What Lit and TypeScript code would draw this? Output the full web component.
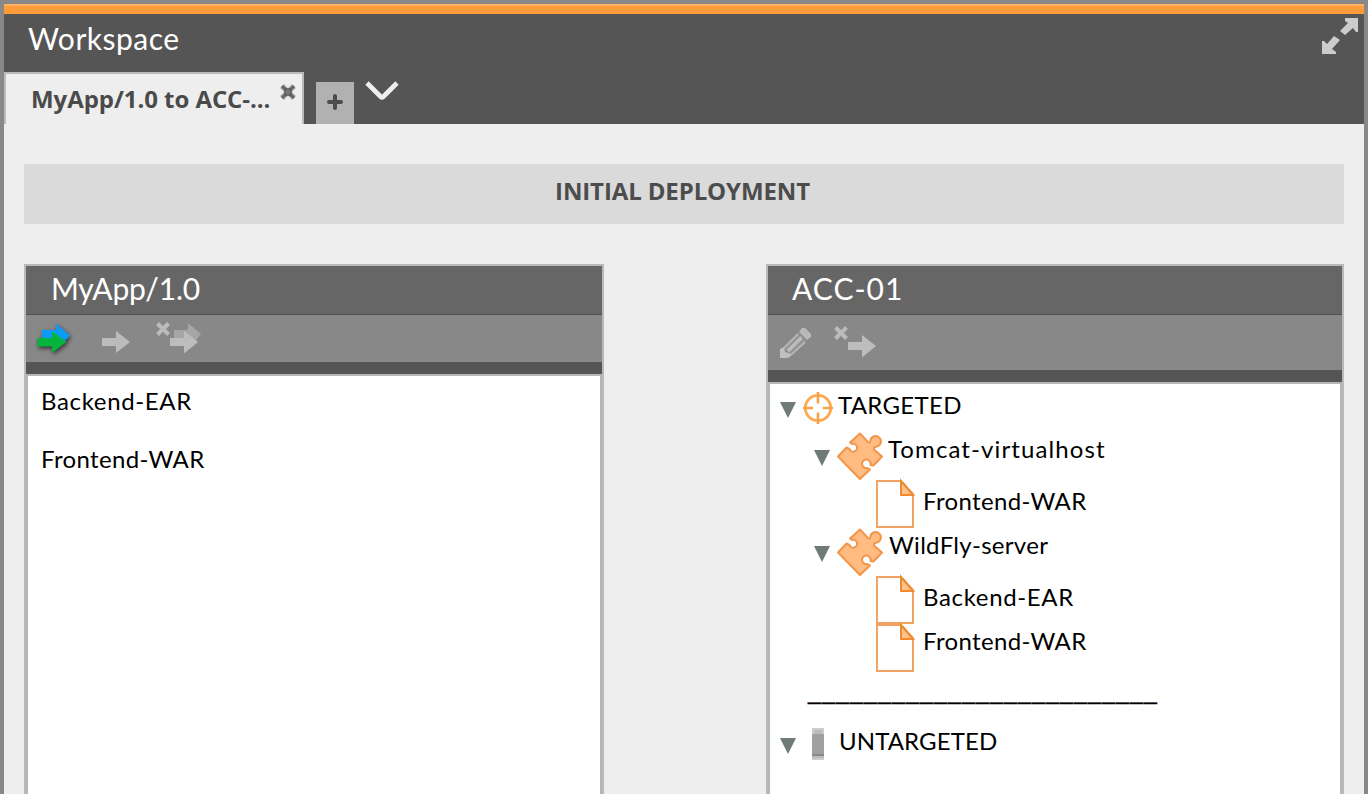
import { LitElement, html, svg, css } from "lit";
import { customElement, property } from "lit/decorators.js";

const arrowPath = "M0 9H14V2L28 13L14 24V17H0Z";
const headPath = "M14 15H28V8L42 19L28 30.5V23H14Z";
const crossPath = "M1.500 0.500L12.500 11.500M12.500 0.500L1.500 11.500";

const icons: Record<string, { w: number; h: number; art: unknown }> = {
  expand: { w: 36, h: 36, art: svg`<path fill="#ccc" d="M23 0H36V14H34L31 10L23 17L18 13L26 5L23 3ZM0 36V23H2L5 26L12 18L18 22L10 31L14 34V36Z"/>` },
  close: { w: 16, h: 16, art: svg`<path stroke="#aaa" stroke-width="5.5" d="M2 2L14 14M14 2L2 14"/><path stroke="#666" stroke-width="3" d="M2 2L14 14M14 2L2 14"/><path fill="#777" stroke="#5c5c5c" stroke-width="1.5" d="M5 5h6v6H5z"/>` },
  plus: { w: 16, h: 16, art: svg`<path stroke="#4c4c4c" stroke-width="4" stroke-linecap="round" d="M8 2V14M2 8H14"/>` },
  chevron: { w: 32, h: 20, art: svg`<path fill="none" stroke="#eee" stroke-width="4.6" d="M1 2L14.500 15.500Q16 17 17.500 15.500L31 2"/>` },
  deploy: { w: 38, h: 36, art: svg`<g style="filter:drop-shadow(1.5px 2px 2px #333)"><path fill="#0d9bf8" d="M5 7H19V0.500L33 12.500L28 18L20 16L5 16Z"/><path fill="#06b33c" d="M0.500 15H15V8L29.500 19L15 30V23.500H0.500Z"/></g>` },
  arrow: { w: 28, h: 25, art: svg`<path fill="#bbb" d=${arrowPath}/>` },
  undeployAll: { w: 46, h: 32, art: svg`<path fill="#a6a6a6" d="M18 7H32V0L45 11L40 17L34 15L18 15Z"/><path fill="#bdbdbd" d=${headPath}/><path stroke="#bbb" stroke-width="4" d=${crossPath}/>` },
  undeploy: { w: 43, h: 32, art: svg`<path fill="#bdbdbd" d=${headPath}/><path stroke="#bbb" stroke-width="4" d=${crossPath}/>` },
  pencil: { w: 31, h: 30, art: svg`<path fill="#b8b8b8" d="M22 0H25L31 6V9L27 12L19 4Z"/><path fill="#959595" d="M18 5L26 13L11 28L3 20Z"/><path stroke="#b4b4b4" stroke-width="2" d="M18 6L4 20M25 14L11 27"/><path stroke="#bcbcbc" stroke-width="3.500" d="M21.500 9.500L8 23"/><path fill="#c0c0c0" d="M0 21L4 19L5 24L11 26V28L8 30H0Z"/>` },
  target: { w: 30, h: 32, art: svg`<circle cx="15" cy="16" r="12.7" fill="none" stroke="#ffa850" stroke-width="2.8"/><path stroke="#f9a04a" stroke-width="2.6" d="M15 0V11.500M15 20.500V32M0 16H10M20 16H30"/>` },
  puzzle: { w: 46, h: 48, art: svg`<path fill="#ffbb82" stroke="#f2964a" stroke-width="2" stroke-linejoin="round" d="M23 1.500L31 10C32.500 11.500 33.500 10.500 33.500 8A5.300 5.300 0 1 1 40 14.500C37 15 36 16.500 37.500 18L45 24.500L36.500 33.500L33.500 33A4.300 4.300 0 1 0 30.500 36L33 37.500L23 47L1 24.500L9.500 15.500L12.500 17A3.900 3.900 0 1 0 15 12L13 10.500Z"/>` },
  file: { w: 38, h: 48, art: svg`<path fill="#fff" stroke="#f2a362" stroke-width="2" d="M1 1H25L37 14V47H1Z"/><path fill="#ffc18d" stroke="#ee8b35" stroke-width="2" d="M25 1V15H37Z"/>` },
  server: { w: 14, h: 32, art: svg`<path fill="#ccc" d="M1 0H13V32H1Z"/><path fill="#a0a0a0" d="M1 6H13V26H1Z"/><path fill="#bbb" d="M3 2H11V6H3ZM1 28H13V30H1Z"/><path fill="#888" d="M1 26H13V28H1Z"/>` },
  caret: { w: 16, h: 16, art: svg`<path fill="#707a79" d="M0 0H16L8 16Z"/>` },
};

@customElement("ui-icon")
export class UiIcon extends LitElement {
  static styles = css`
    :host { display: block; flex: none; }
    svg { display: block; overflow: visible; }
  `;
  @property() name = "arrow";
  render() {
    const i = icons[this.name];
    return html`<svg width=${i.w} height=${i.h} viewBox="0 0 ${i.w} ${i.h}" fill="none">${i.art}</svg>`;
  }
}

@customElement("app-root")
export class AppRoot extends LitElement {
  static styles = css`
    :host { display: block; height: 794px; overflow: hidden; font-family: Lato, sans-serif; color: #000; }
    * { box-sizing: border-box; }
    .window { height: 794px; border: solid #888; border-width: 4px 4px 0; background: #eee; overflow: hidden; }
    .accent { height: 10px; background: #ff9c3a; border-top: 2px solid #ffb163; }
    .header { height: 110px; background: #555; display: flex; flex-direction: column; }
    .bar { height: 58px; padding: 4px 6px 0 24px; display: flex; justify-content: space-between; }
    .title { color: #fff; font-size: 30px; line-height: 44px; white-space: nowrap; }
    .workspace { letter-spacing: 0.5px; line-height: 40px; }
    .app { letter-spacing: -0.2px; }
    .acc { letter-spacing: 1px; }
    .tabs { height: 52px; display: flex; align-items: flex-start; }
    .tab { width: 300px; height: 52px; background: #eee; border: 2px solid #bbb; border-bottom: 0; padding: 0 6px 0 25px; display: flex; justify-content: space-between; }
    .tab-label { font: bold 24px/50px "Open Sans", sans-serif; color: #4a4a4a; white-space: nowrap; letter-spacing: -0.06px; }
    .tab-close { margin-top: 10px; }
    .add { width: 38px; height: 42px; margin: 10px 12px 0; background: #b1b1b1; display: flex; justify-content: center; padding-top: 12px; }
    .more { margin-top: 9px; }
    .banner { margin: 40px 20px; height: 60px; background: #dadada; text-align: center; font: bold 24px/54px "Open Sans", sans-serif; color: #4c4c4c; padding-right: 3px; letter-spacing: -0.12px; }
    .panels { display: flex; justify-content: space-between; padding: 0 20px; }
    .panel { width: 580px; height: 530px; border: 2px solid #b7b9ba; border-bottom: 0; display: flex; flex-direction: column; }
    .panel.env { width: 578px; }
    .panel-title { height: 49px; background: #666; border-bottom: 1px solid #505050; padding-left: 25px; }
    .env .panel-title { padding-left: 24px; }
    .tools { height: 47px; background: #888; display: flex; align-items: flex-start; }
    .env .tools { height: 55px; }
    .strip { height: 12px; background: #555; }
    .body { flex: 1; background: #fff; border: 2px solid #b4b7b9; border-bottom: 0; }
    .deploy { margin: 8px 0 0 11px; }
    .map { margin: 14px 0 0 27px; }
    .undeploy-all { margin: 8px 0 0 26px; }
    .edit { margin: 13px 0 0 12px; }
    .undeploy { margin: 12px 0 0 23px; }
    .list { padding: 0 13px; }
    .item { height: 58px; line-height: 50px; font-size: 24px; }
    .label { font-size: 24px; line-height: 42px; white-space: nowrap; }
    .backend { letter-spacing: 0.65px; }
    .frontend { letter-spacing: 0.36px; }
    .tomcat { letter-spacing: 1.1px; }
    .wildfly { letter-spacing: 0.3px; padding-left: 1px; }
    .targeted { letter-spacing: 0.3px; }
    .untargeted { letter-spacing: 0.1px; }
    .row { display: flex; height: 48px; align-items: flex-start; padding-left: 10px; }
    .row.host { padding-left: 44px; }
    .row.leaf { padding-left: 106px; }
    .twisty { margin: 18px 0 0; }
    .target { margin: 8px 5px 0 7px; }
    .puzzle { margin: 0 5px 0 7px; }
    .file { margin-right: 9px; }
    .server { margin: 8px 14px 0 15px; }
    .high { margin-top: -4px; }
    .rule { height: 48px; padding-left: 38px; line-height: 36px; font-size: 23px; white-space: nowrap; }
    .dashes { font-family: "Liberation Sans", sans-serif; letter-spacing: 1.21px; -webkit-text-stroke: 0.3px #000; }
  `;

  private hostRow(label: string, cls: string) {
    return html`<div class="row host"><ui-icon class="twisty" name="caret"></ui-icon><ui-icon class="puzzle" name="puzzle"></ui-icon><span class="label high ${cls}">${label}</span></div>`;
  }

  private leafRow(label: string, cls = "") {
    return html`<div class="row leaf"><ui-icon class="file" name="file"></ui-icon><span class="label ${cls}">${label}</span></div>`;
  }

  render() {
    return html`
      <div class="window">
        <div class="accent"></div>
        <div class="header">
          <div class="bar"><span class="title workspace">Workspace</span><ui-icon name="expand"></ui-icon></div>
          <div class="tabs">
            <div class="tab"><span class="tab-label">MyApp/1.0 to ACC-...</span><ui-icon class="tab-close" name="close"></ui-icon></div>
            <div class="add"><ui-icon name="plus"></ui-icon></div>
            <ui-icon class="more" name="chevron"></ui-icon>
          </div>
        </div>
        <div class="banner"><span class="banner-text">INITIAL DEPLOYMENT</span></div>
        <div class="panels">
          <div class="panel">
            <div class="panel-title"><span class="title app">MyApp/1.0</span></div>
            <div class="tools">
              <ui-icon class="deploy" name="deploy"></ui-icon>
              <ui-icon class="map" name="arrow"></ui-icon>
              <ui-icon class="undeploy-all" name="undeployAll"></ui-icon>
            </div>
            <div class="strip"></div>
            <div class="body list">
              <div class="item"><span class="backend">Backend-EAR</span></div>
              <div class="item"><span class="frontend">Frontend-WAR</span></div>
            </div>
          </div>
          <div class="panel env">
            <div class="panel-title"><span class="title acc">ACC-01</span></div>
            <div class="tools">
              <ui-icon class="edit" name="pencil"></ui-icon>
              <ui-icon class="undeploy" name="undeploy"></ui-icon>
            </div>
            <div class="strip"></div>
            <div class="body">
              <div class="row"><ui-icon class="twisty" name="caret"></ui-icon><ui-icon class="target" name="target"></ui-icon><span class="label targeted">TARGETED</span></div>
              ${this.hostRow("Tomcat-virtualhost", "tomcat")}
              ${this.leafRow("Frontend-WAR", "frontend")}
              ${this.hostRow("WildFly-server", "wildfly")}
              ${this.leafRow("Backend-EAR", "backend")}
              ${this.leafRow("Frontend-WAR", "frontend high")}
              <div class="rule"><span class="dashes">_________________________</span></div>
              <div class="row"><ui-icon class="twisty" name="caret"></ui-icon><ui-icon class="server" name="server"></ui-icon><span class="label untargeted">UNTARGETED</span></div>
            </div>
          </div>
        </div>
      </div>
    `;
  }
}
